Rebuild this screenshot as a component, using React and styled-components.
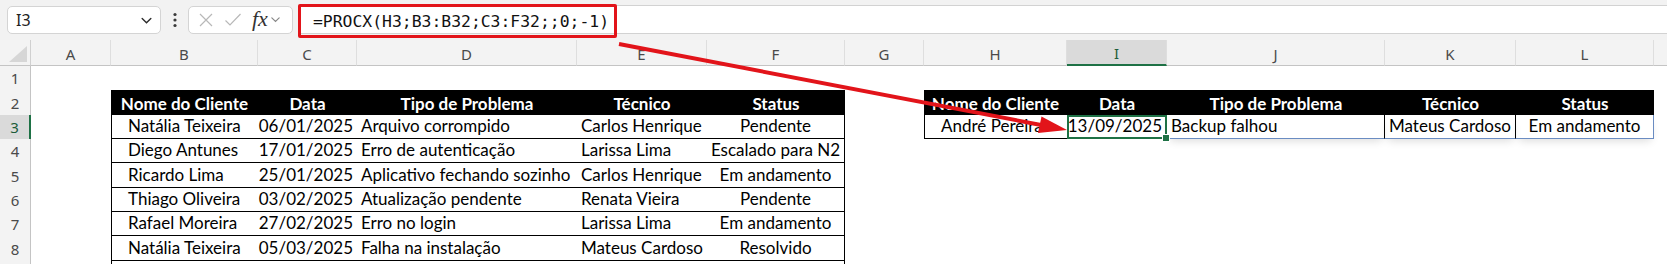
import styled, { createGlobalStyle } from 'styled-components';

const GlobalStyle = createGlobalStyle`
  html, body {
    margin: 0;
    padding: 0;
    background: #fff;
  }
  body {
    font-family: 'Lato', 'Liberation Sans', sans-serif;
    overflow: hidden;
  }
`;

const GREEN = '#1e7145';
const RED = '#e2141a';
const SPILL = '#6a8cc2';

// column letters and their widths in px
const COLUMNS = [
  ['A', 80], ['B', 147], ['C', 99], ['D', 220], ['E', 130], ['F', 138],
  ['G', 79], ['H', 143], ['I', 100], ['J', 218], ['K', 131], ['L', 138], ['M', 60],
];
const ROW_HEIGHTS = [24, 25, 24, 24, 25, 24, 24, 25, 24];

const HEADERS = ['Nome do Cliente', 'Data', 'Tipo de Problema', 'Técnico', 'Status'];
const ALIGNS = ['indent', 'right', 'left', 'left', 'center'];

const TICKETS = [
  ['Natália Teixeira', '06/01/2025', 'Arquivo corrompido', 'Carlos Henrique', 'Pendente'],
  ['Diego Antunes', '17/01/2025', 'Erro de autenticação', 'Larissa Lima', 'Escalado para N2'],
  ['Ricardo Lima', '25/01/2025', 'Aplicativo fechando sozinho', 'Carlos Henrique', 'Em andamento'],
  ['Thiago Oliveira', '03/02/2025', 'Atualização pendente', 'Renata Vieira', 'Pendente'],
  ['Rafael Moreira', '27/02/2025', 'Erro no login', 'Larissa Lima', 'Em andamento'],
  ['Natália Teixeira', '05/03/2025', 'Falha na instalação', 'Mateus Cardoso', 'Resolvido'],
];

const RESULT = ['André Pereira', '13/09/2025', 'Backup falhou', 'Mateus Cardoso', 'Em andamento'];

const Window = styled.div`
  position: relative;
  width: 1667px;
  height: 264px;
  overflow: hidden;
  background: #fff;
`;

/* ---------- formula bar ---------- */

const Toolbar = styled.div`
  display: flex;
  align-items: flex-start;
  height: 40px;
  background: #f2f2f2;
`;

const NameBox = styled.div`
  box-sizing: border-box;
  display: flex;
  align-items: center;
  justify-content: space-between;
  margin: 6px 0 0 7px;
  width: 154px;
  height: 28px;
  padding: 0 7px 0 8px;
  background: #fff;
  border: 1px solid #d4d4d4;
  border-radius: 5px;
  font-family: 'Noto Sans', sans-serif;
  font-size: 16px;
  color: #222;
`;

const Grip = styled.div`
  display: flex;
  justify-content: center;
  align-items: center;
  width: 27px;
  height: 40px;
`;

const FxBox = styled.div`
  box-sizing: border-box;
  display: flex;
  align-items: center;
  gap: 10px;
  margin-top: 6px;
  width: 105px;
  height: 28px;
  padding: 0 6px 0 9px;
  background: #fff;
  border: 1px solid #d4d4d4;
  border-radius: 5px;
`;

const FxLabel = styled.span`
  display: flex;
  align-items: center;
  gap: 2px;
  font-family: 'Liberation Serif', serif;
  font-style: italic;
  font-size: 22px;
  color: #333;
  margin-top: -2px;
`;

const FormulaInput = styled.div`
  flex: 1;
  display: flex;
  align-items: flex-start;
  margin: 5px 0 0 5px;
  height: 29px;
  background: #fff;
  border-top: 1px solid #d2d2d2;
  border-bottom: 1px solid #d2d2d2;
  box-sizing: border-box;
`;

const Highlight = styled.div`
  box-sizing: border-box;
  display: flex;
  align-items: center;
  margin-top: -2px;
  width: 319px;
  height: 34px;
  padding-left: 12px;
  border: 3px solid ${RED};
  border-radius: 2px;
  font-family: 'DejaVu Sans Mono', 'Liberation Mono', monospace;
  font-size: 16.4px;
  color: #111;
`;

/* ---------- sheet ---------- */

const Sheet = styled.div`
  display: grid;
  grid-template-columns: 31px ${COLUMNS.map(([, w]) => `${w}px`).join(' ')};
  grid-template-rows: 26px ${ROW_HEIGHTS.map((h) => `${h}px`).join(' ')};
`;

const Corner = styled.div`
  position: relative;
  background: #f3f3f3;
  border-right: 1px solid #d0d0d0;
  border-bottom: 1px solid #c4c4c4;
  box-sizing: border-box;

  &::after {
    content: '';
    position: absolute;
    right: 3px;
    bottom: 3px;
    border-left: 18px solid transparent;
    border-bottom: 16px solid #d6d6d6;
  }
`;

const ColHeader = styled.div`
  box-sizing: border-box;
  display: flex;
  align-items: center;
  justify-content: center;
  background: ${(p) => (p.$active ? '#dadada' : '#f3f3f3')};
  border-right: 1px solid #dedede;
  border-bottom: ${(p) => (p.$active ? `2px solid ${GREEN}` : '1px solid #c4c4c4')};
  font-family: 'Noto Sans', sans-serif;
  font-size: 15px;
  color: ${(p) => (p.$active ? '#1d5c39' : '#4a4a4a')};
  padding-top: 2px;
`;

const RowHeader = styled.div`
  box-sizing: border-box;
  display: flex;
  align-items: center;
  justify-content: center;
  background: ${(p) => (p.$active ? '#dadada' : '#f3f3f3')};
  border-right: ${(p) => (p.$active ? `2px solid ${GREEN}` : '1px solid #c4c4c4')};
  font-family: 'Noto Sans', sans-serif;
  font-size: 15px;
  color: ${(p) => (p.$active ? '#1d5c39' : '#4a4a4a')};
`;

const justify = { left: 'flex-start', indent: 'flex-start', right: 'flex-end', center: 'center' };

const Cell = styled.div`
  box-sizing: border-box;
  display: flex;
  align-items: flex-end;
  justify-content: ${(p) => justify[p.$align || 'left']};
  padding: 0 4px 2px ${(p) => (p.$align === 'indent' ? '16px' : '4px')};
  white-space: nowrap;
  overflow: hidden;
  font-size: 17px;
  color: #000;
`;

const HeadCell = styled(Cell)`
  justify-content: center;
  align-items: center;
  padding: 1px 2px 0;
  background: #000;
  color: #fff;
  font-weight: 700;
`;

const BodyCell = styled(Cell)`
  border-bottom: ${(p) => (p.$open ? 'none' : '1px solid #000')};
  border-left: ${(p) => (p.$first ? '1px solid #000' : 'none')};
  border-right: ${(p) => (p.$last ? '1px solid #000' : 'none')};
`;

const SelectedCell = styled(Cell)`
  position: relative;
  overflow: visible;
  border: 2px solid ${GREEN};
  padding: 0 3px 1px;
`;

const FillHandle = styled.span`
  position: absolute;
  right: -5px;
  bottom: -5px;
  width: 6px;
  height: 6px;
  background: ${GREEN};
  border: 1px solid #fff;
`;

const SpillCell = styled(Cell)`
  border-bottom: 1px solid ${SPILL};
  border-right: 1px solid ${(p) => (p.$last ? SPILL : '#000')};
  box-shadow: 0 5px 8px -3px rgba(0, 0, 0, 0.14);
`;

const Blank = styled.div``;

const ArrowLayer = styled.svg`
  position: absolute;
  top: 0;
  left: 0;
  pointer-events: none;
`;

const Chevron = ({ size = 12, color = '#333' }) => (
  <svg width={size} height={size} viewBox="0 0 12 12">
    <path d="M2 4.2 L6 8 L10 4.2" fill="none" stroke={color} strokeWidth="1.3" strokeLinecap="round" />
  </svg>
);

function renderCell(row, col) {
  const key = `${row}-${col}`;
  const inMain = col >= 1 && col <= 5;
  const inResult = col >= 7 && col <= 11;

  if (row === 2 && inMain) return <HeadCell key={key}>{HEADERS[col - 1]}</HeadCell>;
  if (row === 2 && inResult) return <HeadCell key={key}>{HEADERS[col - 7]}</HeadCell>;

  if (row >= 3 && row <= 8 && inMain) {
    return (
      <BodyCell key={key} $align={ALIGNS[col - 1]} $first={col === 1} $last={col === 5}>
        {TICKETS[row - 3][col - 1]}
      </BodyCell>
    );
  }
  if (row === 9 && inMain) {
    return <BodyCell key={key} $open $first={col === 1} $last={col === 5} />;
  }

  if (row === 3 && inResult) {
    const i = col - 7;
    if (i === 0) {
      return (
        <BodyCell key={key} $align="indent" $first>
          {RESULT[0]}
        </BodyCell>
      );
    }
    if (i === 1) {
      return (
        <SelectedCell key={key} $align="right">
          {RESULT[1]}
          <FillHandle />
        </SelectedCell>
      );
    }
    return (
      <SpillCell key={key} $align={ALIGNS[i]} $last={i === 4}>
        {RESULT[i]}
      </SpillCell>
    );
  }

  return <Blank key={key} />;
}

export default function App() {
  const rows = ROW_HEIGHTS.map((_, r) => r + 1);

  return (
    <Window>
      <GlobalStyle />
      <Toolbar>
        <NameBox>
          <span>I3</span>
          <Chevron size={13} color="#2b2b2b" />
        </NameBox>
        <Grip>
          <svg width="4" height="16" viewBox="0 0 4 16">
            <circle cx="2" cy="2.5" r="1.6" fill="#3a3a3a" />
            <circle cx="2" cy="8" r="1.6" fill="#3a3a3a" />
            <circle cx="2" cy="13.5" r="1.6" fill="#3a3a3a" />
          </svg>
        </Grip>
        <FxBox>
          <svg width="16" height="16" viewBox="0 0 16 16">
            <path d="M2 2 L14 14 M14 2 L2 14" stroke="#b8b8b8" strokeWidth="1.2" fill="none" />
          </svg>
          <svg width="18" height="16" viewBox="0 0 18 16">
            <path d="M1.5 8.5 L6 13 L16.5 2" stroke="#b8b8b8" strokeWidth="1.2" fill="none" />
          </svg>
          <FxLabel>
            fx
            <Chevron size={11} color="#888" />
          </FxLabel>
        </FxBox>
        <FormulaInput>
          <Highlight>=PROCX(H3;B3:B32;C3:F32;;0;-1)</Highlight>
        </FormulaInput>
      </Toolbar>

      <Sheet>
        <Corner />
        {COLUMNS.map(([letter]) => (
          <ColHeader key={letter} $active={letter === 'I'}>
            {letter === 'M' ? '' : letter}
          </ColHeader>
        ))}
        {rows.map((row) => [
          // row 9 sits below the visible edge, so its number is left out
          <RowHeader key={`h${row}`} $active={row === 3}>
            {row < 9 ? row : ''}
          </RowHeader>,
          ...COLUMNS.map((_, col) => renderCell(row, col)),
        ])}
      </Sheet>

      <ArrowLayer width="1667" height="264" viewBox="0 0 1667 264">
        <line x1="619" y1="44" x2="1041" y2="125" stroke={RED} strokeWidth="4" />
        <polygon points="1067,130 1041.5,116.5 1038,133" fill={RED} />
      </ArrowLayer>
    </Window>
  );
}
